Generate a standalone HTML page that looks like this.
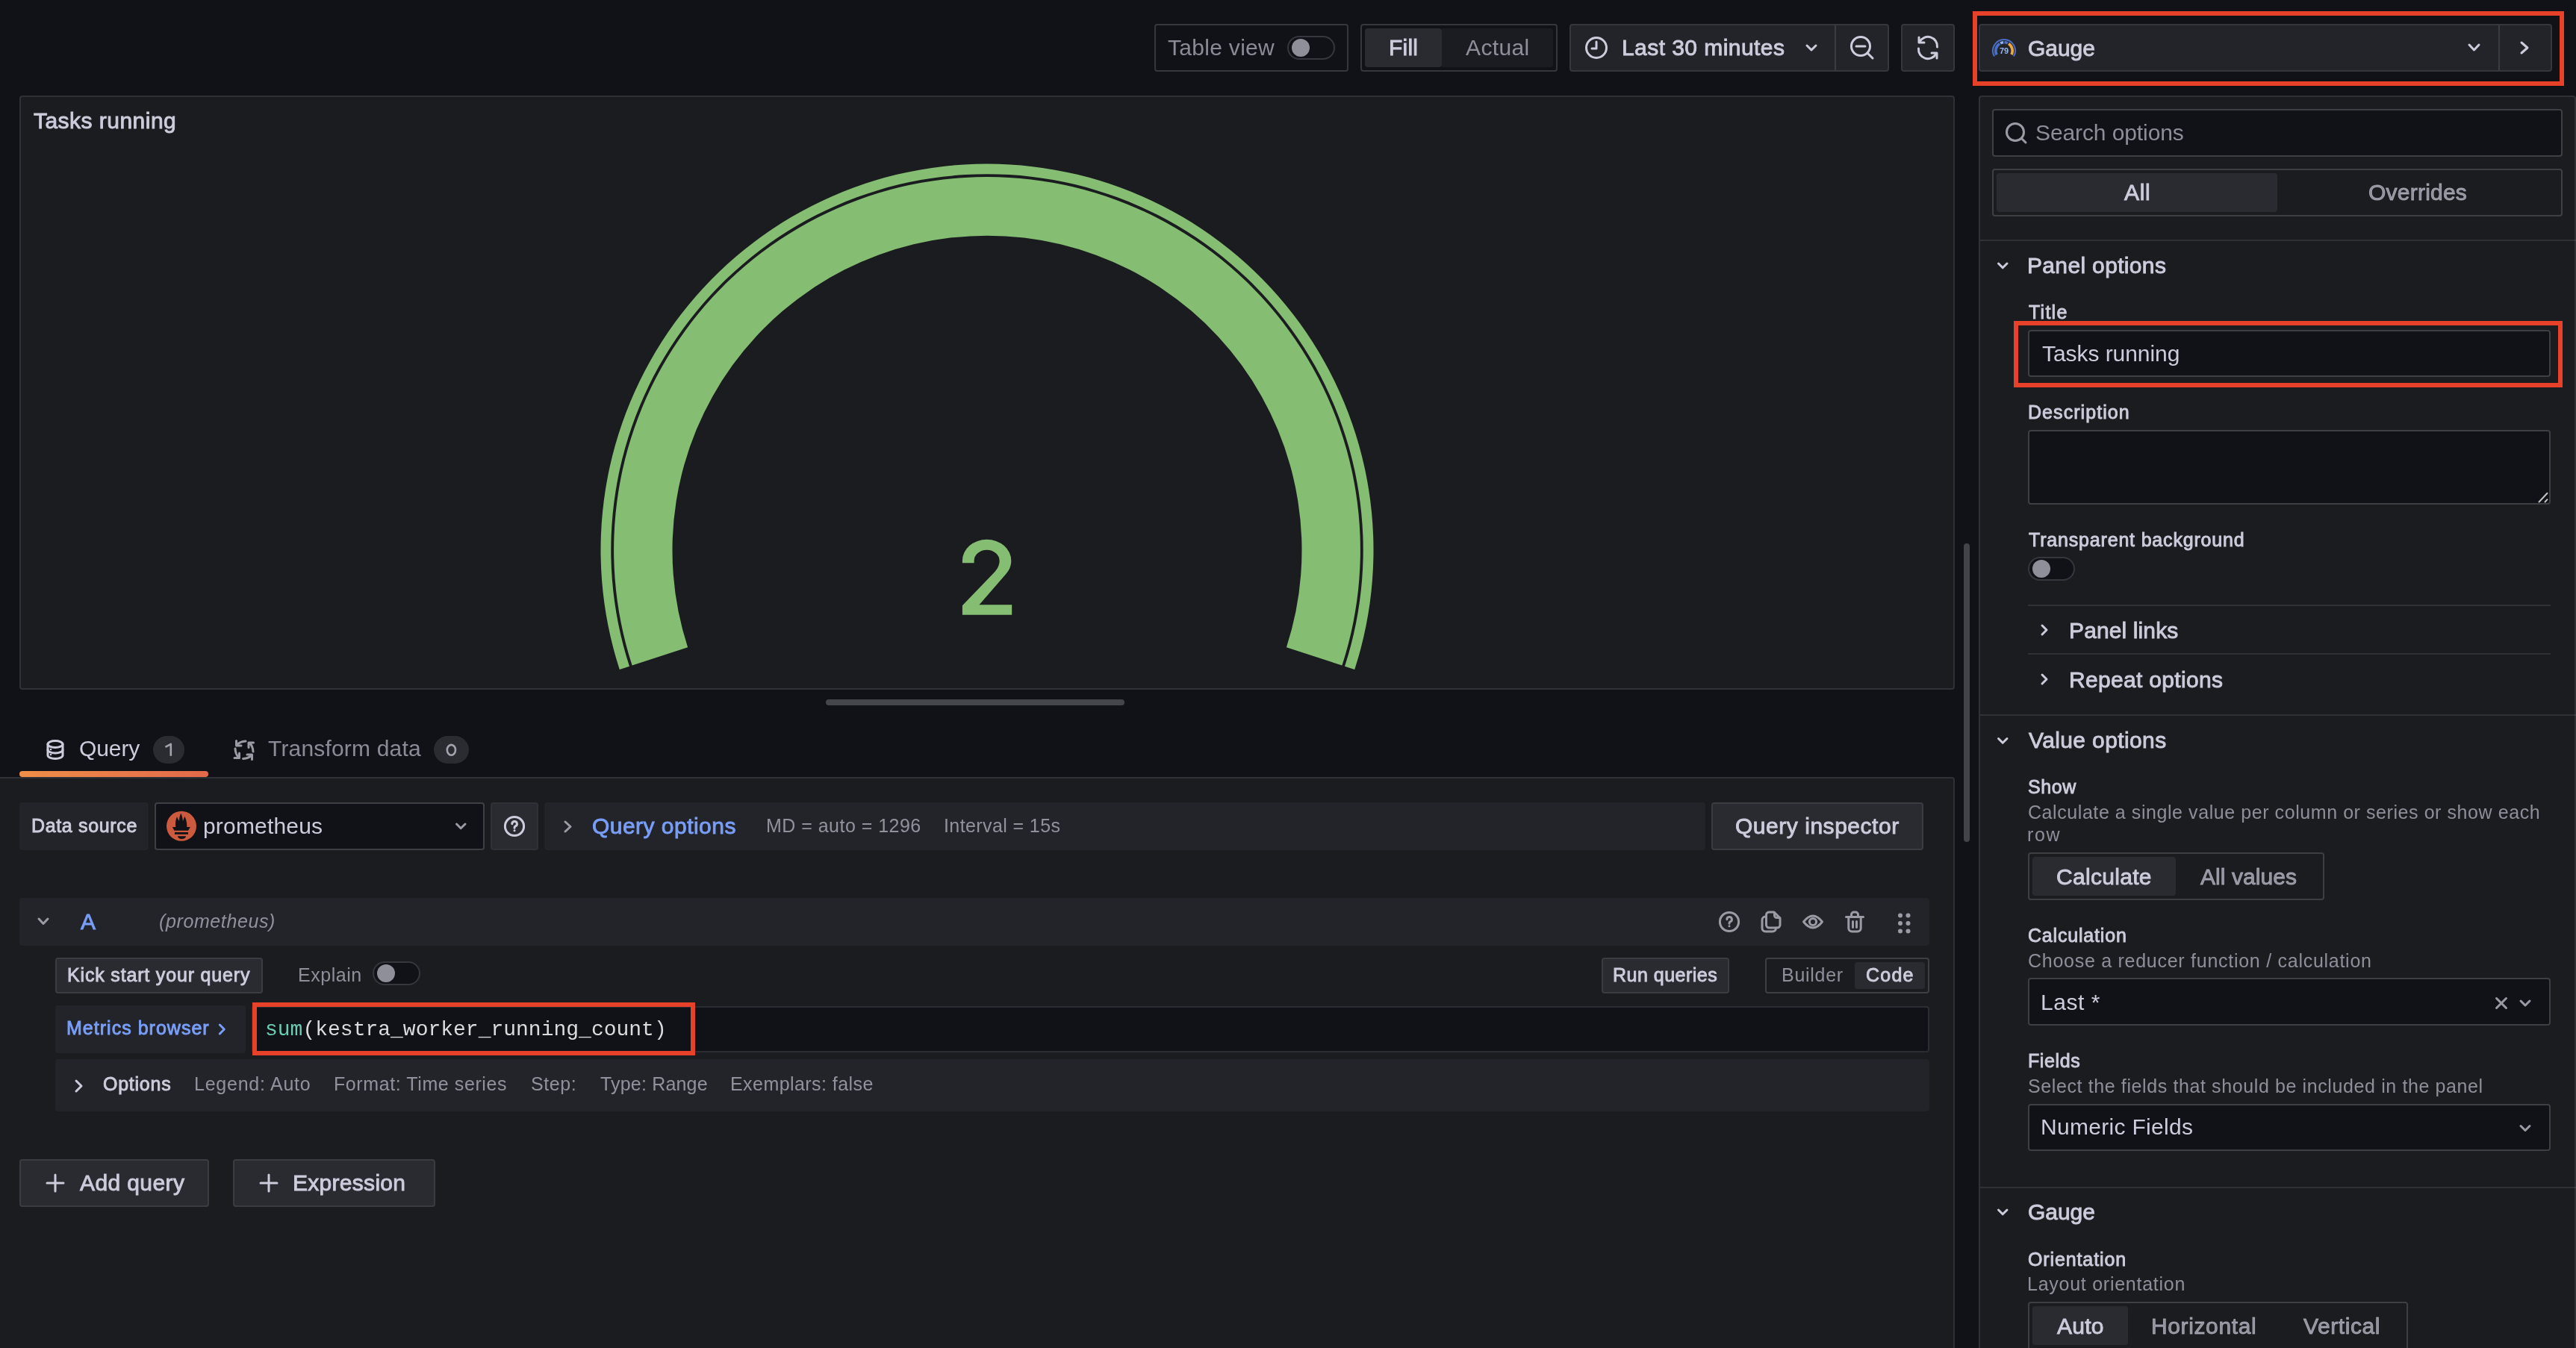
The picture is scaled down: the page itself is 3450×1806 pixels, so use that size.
<!DOCTYPE html>
<html><head><meta charset="utf-8">
<style>
html,body{margin:0;padding:0;}
body{width:3450px;height:1806px;overflow:hidden;background:#111217;position:relative;font-family:"Liberation Sans",sans-serif;color:#ccccdc;}
.a{position:absolute;box-sizing:border-box;}
.b{position:absolute;box-sizing:border-box;border:2px solid rgba(204,204,220,0.2);border-radius:4px;background-clip:padding-box;}
.t{position:absolute;white-space:nowrap;line-height:1;will-change:transform;}
.f30{font-size:30px;letter-spacing:0.3px;}
.f25{font-size:25px;letter-spacing:0.4px;}
.m{-webkit-text-stroke:0.9px currentColor;}
.sec{color:rgba(204,204,220,0.65);}
.link{color:#799ef8;}
svg{position:absolute;overflow:visible;}
.ic{fill:none;stroke:currentColor;stroke-width:3;stroke-linecap:round;stroke-linejoin:round;}
</style></head>
<body>

<!-- ============ TOP BAR ============ -->
<div class="b" style="left:1546px;top:32px;width:260px;height:64px;"></div>
<div class="t f30 sec" style="left:1564.0px;top:49px;letter-spacing:0.30px;">Table view</div>
<div class="a" style="left:1724px;top:48px;width:64px;height:32px;border:2px solid rgba(204,204,220,0.2);border-radius:16px;background:#111217;"></div>
<div class="a" style="left:1730px;top:52px;width:24px;height:24px;border-radius:50%;background:#8f8f9a;"></div>

<div class="b" style="left:1822px;top:32px;width:264px;height:64px;"></div>
<div class="a" style="left:1828px;top:38px;width:103px;height:52px;background:#2a2b31;border-radius:4px;"></div>
<div class="a" style="left:1931px;top:38px;width:149px;height:52px;background:#1b1c21;border-radius:0 4px 4px 0;"></div>
<div class="t f30 m" style="left:1859.5px;top:49px;letter-spacing:0.23px;">Fill</div>
<div class="t f30 sec" style="left:1963.0px;top:49px;letter-spacing:0.38px;">Actual</div>

<div class="b" style="left:2102px;top:32px;width:428px;height:64px;background-color:#232429;"></div>
<div class="a" style="left:2457px;top:34px;width:2px;height:60px;background:rgba(204,204,220,0.15);"></div>
<svg style="left:0;top:0" width="1" height="1">
  <g class="ic" style="color:#ccccdc">
    <circle cx="2138" cy="64" r="13.5"/>
    <path d="M2138 56 V65 H2132"/>
  </g>
</svg>
<div class="t f30 m" style="left:2171.6px;top:49px;letter-spacing:0.44px;">Last 30 minutes</div>
<svg style="left:0;top:0" width="1" height="1"><g class="ic" style="color:#ccccdc"><path d="M2420 61 L2426 67 L2432 61"/></g></svg>
<svg style="left:0;top:0" width="1" height="1"><g class="ic" style="color:#ccccdc">
  <circle cx="2492" cy="62" r="12.5"/><path d="M2486 62 H2498 M2501 71 L2508 78"/></g></svg>

<div class="b" style="left:2546px;top:32px;width:72px;height:64px;background-color:#232429;"></div>
<svg style="left:0;top:0" width="1" height="1"><g class="ic" style="color:#ccccdc">
  <path d="M2594.5 63 A12.5 12.5 0 0 0 2571 56"/><path d="M2569.5 65 A12.5 12.5 0 0 0 2593 72"/>
  <path d="M2570 50 V57 H2577"/><path d="M2594 78 V71 H2587"/></g></svg>

<!-- Gauge picker -->
<div class="b" style="left:2650px;top:32px;width:768px;height:64px;background-color:#232429;"></div>
<div class="a" style="left:3346px;top:34px;width:2px;height:60px;background:rgba(204,204,220,0.15);"></div>
<svg style="left:0;top:0" width="1" height="1">
  <path d="M2671.0 75.5 A15 15 0 1 1 2697.0 75.5" fill="none" stroke="#4a6fc4" stroke-width="2"/>
  <path d="M2674.1 73.3 A11.2 11.2 0 0 1 2678.1 58.5" fill="none" stroke="#4a70c8" stroke-width="3.6"/>
  <path d="M2679.1 57.9 A11.2 11.2 0 0 1 2683.2 56.8" fill="none" stroke="#8fb0f0" stroke-width="3.6"/>
  <path d="M2684.4 56.8 A11.2 11.2 0 0 1 2688.9 57.9" fill="none" stroke="#4a70c8" stroke-width="3.6"/>
  <path d="M2690.1 58.6 A11.2 11.2 0 0 1 2694.0 73.1" fill="none" stroke="#f1a83a" stroke-width="3.6"/>
  <text x="2684" y="72" font-family="Liberation Sans" font-size="11" font-weight="bold" fill="#9ab8f2" text-anchor="middle">79</text>
</svg>
<div class="t f30 m" style="left:2715.7px;top:50px;letter-spacing:-0.05px;">Gauge</div>
<svg style="left:0;top:0" width="1" height="1"><g class="ic" style="color:#ccccdc">
  <path d="M3307 60 L3313.5 67 L3320 60"/><path d="M3377 57 L3385 64 L3377 71"/></g></svg>

<!-- red annotation box around gauge picker -->
<div class="a" style="left:2642px;top:15px;width:792px;height:100px;border:6px solid #e8412a;"></div>

<!-- ============ PANEL ============ -->
<div class="a" style="left:26px;top:128px;width:2592px;height:796px;background:#1b1c20;border:2px solid rgba(204,204,220,0.12);border-radius:4px;"></div>
<div class="t f30 m" style="left:45.0px;top:147px;letter-spacing:0.47px;">Tasks running</div>

<svg style="left:0;top:0" width="1" height="1">
  <!-- cx 1322 cy 737 ; angle 18deg below horizontal -->
  <path d="M829.8 896.9 A517.5 517.5 0 1 1 1814.2 896.9 L1801.0 892.7 A503.7 503.7 0 1 0 843.0 892.7 Z" fill="#85bd72"/>
  <path d="M846.6 891.5 A499.9 499.9 0 1 1 1797.4 891.5 L1722.9 867.3 A421.5 421.5 0 1 0 921.1 867.3 Z" fill="#85bd72"/>
</svg>
<svg style="left:0;top:0" width="1" height="1"><path d="M1288.9 754.2 L1288.9 751.2 A32.7 28.4 0 0 1 1354.3 751.2 C1354.3 758.5 1351.5 764.5 1346 770.5 L1311.5 810.2 L1355.2 810.2 L1355.2 823.8 L1288.9 823.8 L1288.9 811.3 L1331.5 767 C1336 762 1338.6 757 1338.6 751.2 A17 14.5 0 0 0 1304.6 751.2 L1304.6 754.2 Z" fill="#85bd72"/></svg>

<!-- splitter -->
<div class="a" style="left:1106px;top:937px;width:400px;height:8px;border-radius:4px;background:#45464c;"></div>


<!-- ============ QUERY TABS ============ -->
<svg style="left:0;top:0" width="1" height="1"><g class="ic" style="color:#ccccdc" stroke-width="2.6">
  <ellipse cx="74" cy="997" rx="10" ry="4.5"/>
  <path d="M64 997 V1012 A10 4.5 0 0 0 84 1012 V997"/>
  <path d="M64 1004.5 A10 4.5 0 0 0 84 1004.5"/>
  </g><g fill="#ccccdc"><circle cx="68" cy="1004" r="1.3"/><circle cx="68" cy="1011" r="1.3"/></g></svg>
<div class="t f30" style="left:106.0px;top:988px;letter-spacing:-0.08px;">Query</div>
<div class="a" style="left:205px;top:986px;width:42px;height:37px;border-radius:19px;background:#2b2c32;"></div>
<svg style="left:0;top:0" width="1" height="1"><path d="M221.5 1000.8 L228.8 996.8 V1012.8" fill="none" stroke="#a3a3ae" stroke-width="2.6" stroke-linejoin="round"/></svg>

<svg style="left:0;top:0" width="1" height="1"><g class="ic" style="color:#9b9ba5" stroke-width="2.7">
  <path d="M329 993 Q321 993.5 317.5 998"/><path d="M316.5 992.5 V999 H323"/>
  <path d="M339 1007 Q338.5 999 334 995.5"/><path d="M333 1001.5 V995 H339.5"/>
  <path d="M315 1003 Q315.5 1011 319.5 1014.5"/><path d="M314 1015.5 H320.5 V1009"/>
  <path d="M325.5 1016.5 Q333.5 1016 336.5 1012"/><path d="M331 1011 H337.5 V1017.5"/>
  </g></svg>
<div class="t f30 sec" style="left:359.0px;top:988px;letter-spacing:0.18px;">Transform data</div>
<div class="a" style="left:581px;top:986px;width:47px;height:37px;border-radius:19px;background:#2b2c32;"></div>
<svg style="left:0;top:0" width="1" height="1"><ellipse cx="604.4" cy="1004.8" rx="5.6" ry="6.9" fill="none" stroke="#a3a3ae" stroke-width="2.6"/></svg>

<div class="a" style="left:26px;top:1033px;width:253px;height:8px;border-radius:4px;background:linear-gradient(90deg,#ef8e48,#e3694a);"></div>

<!-- query area -->
<div class="a" style="left:-4px;top:1041px;width:2622px;height:800px;background:#1b1c20;border:2px solid rgba(204,204,220,0.12);border-radius:4px;"></div>

<!-- data source row -->
<div class="a" style="left:26px;top:1075px;width:173px;height:64px;background:#232429;border-radius:4px;"></div>
<div class="t f25 m" style="left:41.8px;top:1094px;letter-spacing:0.65px;">Data source</div>
<div class="b" style="left:207px;top:1075px;width:442px;height:64px;background-color:#111217;"></div>
<svg style="left:0;top:0" width="1" height="1">
  <circle cx="243" cy="1106.8" r="20" fill="#cc5a3e"/>
  <path d="M235.6 1110.5 C234.3 1104 235 1098.5 237 1094.3 C238 1097 239 1098.5 240 1100 C240 1095.5 241 1092.5 242.3 1089.8 C243.6 1092.5 244.6 1096 244.9 1100 C245.7 1098.3 246.6 1096 247.2 1093.7 C249.6 1097.5 250.8 1103.5 250.2 1110.5 Z" fill="#111217"/>
  <path d="M230.9 1108 L236 1108 L236.5 1109.6 L249.6 1109.6 L250.2 1108 L254.8 1108 L252.1 1112.7 L233.4 1112.7 Z" fill="#111217"/>
  <rect x="234" y="1115" width="18" height="2.8" fill="#111217"/>
  <path d="M238 1120.2 H249 A5.5 3.8 0 0 1 238 1120.2 Z" fill="#111217"/>
</svg>
<div class="t f30" style="left:271.7px;top:1092px;letter-spacing:0.18px;">prometheus</div>
<svg style="left:0;top:0" width="1" height="1"><g class="ic" style="color:#9b9ba5" stroke-width="2.7"><path d="M611.5 1104 L617.2 1109.7 L623 1104"/></g></svg>

<div class="b" style="left:657px;top:1075px;width:64px;height:64px;background-color:#2a2b31;border-color:rgba(204,204,220,0.12);"></div>
<svg style="left:0;top:0" width="1" height="1"><g class="ic" style="color:#ccccdc" stroke-width="2.4">
  <circle cx="689" cy="1107" r="12.6"/><path d="M685.8 1103.8 A3.3 3.3 0 1 1 690.2 1106.9 Q689 1107.6 689 1109.2"/></g>
  <circle cx="689" cy="1112.8" r="1.5" fill="#ccccdc"/></svg>

<div class="a" style="left:729px;top:1075px;width:1555px;height:64px;background:#232429;border-radius:4px;"></div>
<svg style="left:0;top:0" width="1" height="1"><g class="ic" style="color:#9b9ba5" stroke-width="2.8"><path d="M757 1101 L764 1107.5 L757 1114"/></g></svg>
<div class="t f30 link m" style="left:793.0px;top:1092px;letter-spacing:0.47px;">Query options</div>
<div class="t f25 sec" style="left:1025.5px;top:1094px;letter-spacing:0.47px;">MD = auto = 1296</div>
<div class="t f25 sec" style="left:1264.0px;top:1094px;letter-spacing:0.40px;">Interval = 15s</div>

<div class="b" style="left:2292px;top:1075px;width:284px;height:64px;background-color:#2a2b31;;border-color:rgba(204,204,220,0.18)"></div>
<div class="t f30 m" style="left:2323.8px;top:1092px;letter-spacing:0.53px;">Query inspector</div>

<!-- query row A header -->
<div class="a" style="left:26px;top:1203px;width:2558px;height:64px;background:#232429;border-radius:4px;"></div>
<svg style="left:0;top:0" width="1" height="1"><g class="ic" style="color:#9b9ba5" stroke-width="2.8"><path d="M52 1231 L58 1237.5 L64 1231"/></g></svg>
<div class="t f30 link m" style="left:108.4px;top:1220px;">A</div>
<div class="t f25 sec" style="left:212.6px;top:1222px;font-style:italic;letter-spacing:0.61px;">(prometheus)</div>
<svg style="left:0;top:0" width="1" height="1"><g class="ic" style="color:#9b9ba5" stroke-width="2.4">
  <circle cx="2316" cy="1235" r="12.6"/><path d="M2312.8 1231.8 A3.3 3.3 0 1 1 2317.2 1234.9 Q2316 1235.6 2316 1237.2"/>
  <path d="M2370 1222 H2376 L2384 1230 V1239 A4 4 0 0 1 2380 1243 H2369.5 A4 4 0 0 1 2365.5 1239 V1226 A4 4 0 0 1 2370 1222 Z"/>
  <path d="M2376.5 1222.5 V1226.5 A3 3 0 0 0 2379.5 1229.5 H2383.5"/>
  <path d="M2365.5 1228 H2364.5 A4.5 4.5 0 0 0 2360 1232.5 V1243.5 A4.5 4.5 0 0 0 2364.5 1248 H2374 A4.5 4.5 0 0 0 2378.5 1243.5 V1243"/>
  <path d="M2415.5 1235 Q2428 1219 2440.5 1235 Q2428 1251 2415.5 1235 Z"/><circle cx="2428" cy="1235" r="4.6"/>
  <path d="M2472.5 1228.5 H2495.5 M2475.8 1229 V1243.5 A4.5 4.5 0 0 0 2480.3 1248 H2487.7 A4.5 4.5 0 0 0 2492.2 1243.5 V1229 M2479.5 1228 V1225.5 A3.5 3.5 0 0 1 2483 1222 H2485 A3.5 3.5 0 0 1 2488.5 1225.5 V1228 M2481.5 1234.5 V1242.5 M2486.5 1234.5 V1242.5"/>
  </g>
  <circle cx="2316" cy="1240.8" r="1.5" fill="#9b9ba5"/>
  <g fill="#9b9ba5"><circle cx="2545" cy="1226.5" r="3"/><circle cx="2555.5" cy="1226.5" r="3"/><circle cx="2545" cy="1237" r="3"/><circle cx="2555.5" cy="1237" r="3"/><circle cx="2545" cy="1247.5" r="3"/><circle cx="2555.5" cy="1247.5" r="3"/></g>
</svg>

<!-- kick start row -->
<div class="b" style="left:74px;top:1283px;width:278px;height:48px;background-color:#2a2b31;;border-color:rgba(204,204,220,0.18)"></div>
<div class="t f25 m" style="left:90.0px;top:1294px;letter-spacing:0.83px;">Kick start your query</div>
<div class="t f25 sec" style="left:398.7px;top:1294px;letter-spacing:0.52px;">Explain</div>
<div class="a" style="left:499px;top:1288px;width:64px;height:32px;border:2px solid rgba(204,204,220,0.2);border-radius:16px;background:#111217;"></div>
<div class="a" style="left:505px;top:1292px;width:24px;height:24px;border-radius:50%;background:#8f8f9a;"></div>

<div class="b" style="left:2145px;top:1283px;width:171px;height:48px;background-color:#2a2b31;;border-color:rgba(204,204,220,0.18)"></div>
<div class="t f25 m" style="left:2160.4px;top:1294px;letter-spacing:0.49px;">Run queries</div>
<div class="b" style="left:2364px;top:1283px;width:220px;height:48px;background-color:#1b1c20;"></div>
<div class="a" style="left:2484px;top:1289px;width:94px;height:36px;background:#2a2b31;border-radius:4px;"></div>
<div class="t f25 sec" style="left:2386.0px;top:1294px;letter-spacing:0.73px;">Builder</div>
<div class="t f25 m" style="left:2499.0px;top:1294px;letter-spacing:1.23px;">Code</div>

<!-- metrics browser row -->
<div class="a" style="left:74px;top:1347px;width:255px;height:64px;background:#232429;border-radius:4px;"></div>
<div class="t f25 link m" style="left:89.0px;top:1365px;letter-spacing:1.02px;">Metrics browser</div>
<svg style="left:0;top:0" width="1" height="1"><g class="ic" style="color:#799ef8" stroke-width="2.6"><path d="M294.3 1373 L300.3 1379 L294.3 1385"/></g></svg>
<div class="a" style="left:337px;top:1348px;width:2247px;height:62px;background:#111217;border:2px solid rgba(204,204,220,0.15);border-radius:4px;"></div>
<div class="t" style="left:355.3px;top:1366px;font-family:'Liberation Mono',monospace;font-size:28px;color:#dcdcde;white-space:pre;"><span style="color:#6ccdb3">sum</span>(kestra_worker_running_count)</div>
<div class="a" style="left:338px;top:1343px;width:593px;height:71px;border:6px solid #e8412a;"></div>

<!-- options row -->
<div class="a" style="left:74px;top:1419px;width:2510px;height:70px;background:#232429;border-radius:4px;"></div>
<svg style="left:0;top:0" width="1" height="1"><g class="ic" style="color:#ccccdc" stroke-width="2.8"><path d="M102 1448 L109 1455 L102 1462"/></g></svg>
<div class="t f25 m" style="left:137.6px;top:1440px;letter-spacing:0.75px;">Options</div>
<div class="t f25 sec" style="left:260.3px;top:1440px;letter-spacing:0.76px;">Legend: Auto</div>
<div class="t f25 sec" style="left:446.9px;top:1440px;letter-spacing:0.59px;">Format: Time series</div>
<div class="t f25 sec" style="left:710.8px;top:1440px;letter-spacing:0.60px;">Step:</div>
<div class="t f25 sec" style="left:803.8px;top:1440px;letter-spacing:0.18px;">Type: Range</div>
<div class="t f25 sec" style="left:978.4px;top:1440px;letter-spacing:0.44px;">Exemplars: false</div>

<!-- add query / expression -->
<div class="b" style="left:26px;top:1553px;width:254px;height:64px;background-color:#2a2b31;;border-color:rgba(204,204,220,0.18)"></div>
<svg style="left:0;top:0" width="1" height="1"><g class="ic" style="color:#ccccdc" stroke-width="2.6"><path d="M74 1574 V1596 M63 1585 H85"/></g></svg>
<div class="t f30 m" style="left:106.7px;top:1570px;letter-spacing:0.39px;">Add query</div>
<div class="b" style="left:312px;top:1553px;width:271px;height:64px;background-color:#2a2b31;;border-color:rgba(204,204,220,0.18)"></div>
<svg style="left:0;top:0" width="1" height="1"><g class="ic" style="color:#ccccdc" stroke-width="2.6"><path d="M360 1574 V1596 M349 1585 H371"/></g></svg>
<div class="t f30 m" style="left:391.7px;top:1570px;letter-spacing:0.29px;">Expression</div>

<!-- scrollbar -->
<div class="a" style="left:2630px;top:728px;width:8px;height:400px;border-radius:4px;background:#434449;"></div>


<!-- ============ RIGHT OPTIONS PANE ============ -->
<div class="a" style="left:2650px;top:128px;width:800px;height:1700px;background:#1b1c20;border:2px solid rgba(204,204,220,0.12);border-radius:4px;"></div>
<div class="b" style="left:2668px;top:146px;width:764px;height:64px;background-color:#111217;"></div>
<svg style="left:0;top:0" width="1" height="1"><g class="ic" style="color:#9b9ba5" stroke-width="2.8"><circle cx="2699" cy="177" r="11.5"/><path d="M2707.5 185.5 L2713 191"/></g></svg>
<div class="t f30" style="left:2726.0px;top:163px;color:#8e8e99;letter-spacing:-0.10px;">Search options</div>

<div class="b" style="left:2668px;top:226px;width:764px;height:64px;background-color:#1b1c20;"></div>
<div class="a" style="left:2674px;top:232px;width:376px;height:52px;background:#2a2b31;border-radius:4px;"></div>
<div class="t f30 m" style="left:2844.6px;top:243px;letter-spacing:0.70px;">All</div>
<div class="t f30 sec m" style="left:3171.6px;top:243px;letter-spacing:0.23px;">Overrides</div>

<div class="a" style="left:2652px;top:321px;width:800px;height:2px;background:rgba(204,204,220,0.12);"></div>
<svg style="left:0;top:0" width="1" height="1"><g class="ic" style="color:#ccccdc" stroke-width="2.3"><path d="M2676.5 353 L2682.2 358.8 L2688 353"/></g></svg>
<div class="t f30 m" style="left:2714.5px;top:341px;letter-spacing:0.34px;">Panel options</div>

<div class="t f25 m" style="left:2716.5px;top:406px;letter-spacing:1.25px;">Title</div>
<div class="b" style="left:2716px;top:442px;width:700px;height:63px;background-color:#111217;"></div>
<div class="t f30" style="left:2735.0px;top:459px;letter-spacing:-0.06px;">Tasks running</div>
<div class="a" style="left:2697px;top:430px;width:735px;height:89px;border:6px solid #e8412a;"></div>

<div class="t f25 m" style="left:2715.5px;top:540px;letter-spacing:1.06px;">Description</div>
<div class="b" style="left:2716px;top:576px;width:700px;height:100px;background-color:#111217;"></div>
<svg style="left:0;top:0" width="1" height="1"><g stroke="#c4c4c6" stroke-width="2" stroke-linecap="round"><path d="M3400.5 672.5 L3411.5 660.8 M3408.5 672.5 L3411.5 669.2"/></g></svg>

<div class="t f25 m" style="left:2716.5px;top:711px;letter-spacing:0.82px;">Transparent background</div>
<div class="a" style="left:2716px;top:746px;width:63px;height:32px;border:2px solid rgba(204,204,220,0.2);border-radius:16px;background:#111217;"></div>
<div class="a" style="left:2722px;top:750px;width:24px;height:24px;border-radius:50%;background:#8f8f9a;"></div>

<div class="a" style="left:2716px;top:810px;width:700px;height:2px;background:rgba(204,204,220,0.12);"></div>
<svg style="left:0;top:0" width="1" height="1"><g class="ic" style="color:#ccccdc" stroke-width="2.6"><path d="M2735 838 L2741 844 L2735 850"/><path d="M2735 904 L2741 910 L2735 916"/></g></svg>
<div class="t f30 m" style="left:2770.8px;top:830px;letter-spacing:0.12px;">Panel links</div>
<div class="a" style="left:2716px;top:875px;width:700px;height:2px;background:rgba(204,204,220,0.12);"></div>
<div class="t f30 m" style="left:2770.8px;top:896px;letter-spacing:0.32px;">Repeat options</div>

<div class="a" style="left:2652px;top:957px;width:800px;height:2px;background:rgba(204,204,220,0.12);"></div>
<svg style="left:0;top:0" width="1" height="1"><g class="ic" style="color:#ccccdc" stroke-width="2.3"><path d="M2676.5 989.5 L2682.2 995.3 L2688 989.5"/></g></svg>
<div class="t f30 m" style="left:2716.6px;top:977px;letter-spacing:0.38px;">Value options</div>

<div class="t f25 m" style="left:2715.9px;top:1042px;letter-spacing:0.57px;">Show</div>
<div class="t f25 sec" style="left:2715.6px;top:1076px;letter-spacing:0.57px;">Calculate a single value per column or series or show each</div>
<div class="t f25 sec" style="left:2714.6px;top:1106px;letter-spacing:1.60px;">row</div>
<div class="b" style="left:2716px;top:1142px;width:397px;height:64px;background-color:#1b1c20;"></div>
<div class="a" style="left:2722px;top:1148px;width:192px;height:52px;background:#2a2b31;border-radius:4px;"></div>
<div class="t f30 m" style="left:2753.7px;top:1160px;letter-spacing:0.30px;">Calculate</div>
<div class="t f30 sec m" style="left:2946.5px;top:1160px;letter-spacing:0.06px;">All values</div>

<div class="t f25 m" style="left:2715.6px;top:1241px;letter-spacing:0.81px;">Calculation</div>
<div class="t f25 sec" style="left:2715.6px;top:1275px;letter-spacing:0.73px;">Choose a reducer function / calculation</div>
<div class="b" style="left:2716px;top:1310px;width:700px;height:64px;background-color:#111217;"></div>
<div class="t f30" style="left:2733.0px;top:1328px;letter-spacing:0.54px;">Last *</div>
<svg style="left:0;top:0" width="1" height="1"><g class="ic" style="color:#9b9ba5" stroke-width="2.6"><path d="M3343.5 1337.5 L3356.5 1350.5 M3356.5 1337.5 L3343.5 1350.5"/><path d="M3376 1341 L3382 1347 L3388 1341"/></g></svg>

<div class="t f25 m" style="left:2715.6px;top:1409px;letter-spacing:0.60px;">Fields</div>
<div class="t f25 sec" style="left:2715.6px;top:1443px;letter-spacing:0.61px;">Select the fields that should be included in the panel</div>
<div class="b" style="left:2716px;top:1479px;width:700px;height:63px;background-color:#111217;"></div>
<div class="t f30" style="left:2733.0px;top:1495px;letter-spacing:0.30px;">Numeric Fields</div>
<svg style="left:0;top:0" width="1" height="1"><g class="ic" style="color:#9b9ba5" stroke-width="2.6"><path d="M3376 1508.5 L3382 1514.5 L3388 1508.5"/></g></svg>

<div class="a" style="left:2652px;top:1590px;width:800px;height:2px;background:rgba(204,204,220,0.12);"></div>
<svg style="left:0;top:0" width="1" height="1"><g class="ic" style="color:#ccccdc" stroke-width="2.3"><path d="M2676.5 1621 L2682.2 1626.8 L2688 1621"/></g></svg>
<div class="t f30 m" style="left:2715.7px;top:1609px;letter-spacing:-0.05px;">Gauge</div>

<div class="t f25 m" style="left:2715.7px;top:1675px;letter-spacing:0.88px;">Orientation</div>
<div class="t f25 sec" style="left:2714.7px;top:1708px;letter-spacing:0.74px;">Layout orientation</div>
<div class="b" style="left:2716px;top:1744px;width:509px;height:80px;background-color:#1b1c20;"></div>
<div class="a" style="left:2722px;top:1750px;width:128px;height:52px;background:#2a2b31;border-radius:4px;"></div>
<div class="t f30 m" style="left:2754.7px;top:1762px;letter-spacing:0.23px;">Auto</div>
<div class="t f30 sec m" style="left:2880.6px;top:1762px;letter-spacing:0.62px;">Horizontal</div>
<div class="t f30 sec m" style="left:3085.0px;top:1762px;letter-spacing:0.59px;">Vertical</div>

</body></html>
